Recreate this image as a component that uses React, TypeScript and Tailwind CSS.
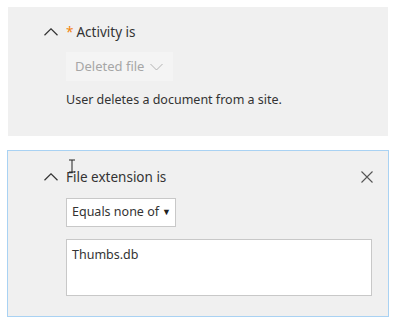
import React from 'react';

function ChevronUp() {
  return (
    <svg width="14" height="8" viewBox="0 0 14 8" className="shrink-0">
      <path d="M0.5 7.2 L7 0.8 L13.5 7.2" fill="none" stroke="#333333" strokeWidth="1.2" />
    </svg>
  );
}

function ChevronDown() {
  return (
    <svg width="13" height="8" viewBox="0 0 13 8" className="shrink-0">
      <path d="M0.5 1 L6.5 7 L12.5 1" fill="none" stroke="#b3b3b3" strokeWidth="1" />
    </svg>
  );
}

function CloseIcon() {
  return (
    <svg width="12" height="12" viewBox="0 0 12 12">
      <path d="M0.5 0.5 L11.5 11.5 M11.5 0.5 L0.5 11.5" fill="none" stroke="#555555" strokeWidth="1.1" />
    </svg>
  );
}

function IBeam() {
  return (
    <svg width="8" height="14" viewBox="0 0 8 14" className="absolute left-[68px] top-[159px]">
      <path d="M1 1 H7 M4 1 V13 M1 13 H7" fill="none" stroke="#222222" strokeWidth="1" />
    </svg>
  );
}

export default function App() {
  return (
    <div
      className="relative w-[400px] h-[325px] bg-white text-[#333333] text-[13.5px] overflow-hidden"
      style={{ fontFamily: '"Segoe UI", "Noto Sans", sans-serif' }}
    >
      <div className="pt-[7px] px-[8px]">
        {/* Activity condition */}
        <div className="w-[380px] h-[129px] bg-[#f0f0f0] pt-[15px] pl-[36px]">
          <div className="flex items-center h-[20px]">
            <ChevronUp />
            <span className="ml-[8px] text-[#f2820c] mr-[3px]">*</span>
            <span>Activity is</span>
          </div>
          <div className="ml-[22px] mt-[10px] w-[107px] h-[29px] bg-[#f4f4f4] flex items-center pl-[9px] gap-[6px] text-[#a6a6a6] text-[13px] whitespace-nowrap">
            <span>Deleted file</span>
            <ChevronDown />
          </div>
          <div className="ml-[22px] mt-[9px] leading-[20px] text-[12.5px]">User deletes a document from a site.</div>
        </div>

        {/* File extension condition */}
        <div className="mt-[14px] -ml-[1px] w-[382px] h-[167px] bg-[#f0f0f0] border border-[#a9d2f3] pt-[16px] pl-[36px] pr-[15px]">
          <div className="flex items-center h-[20px]">
            <ChevronUp />
            <span className="ml-[8px]">File extension is</span>
            <div className="ml-auto">
              <CloseIcon />
            </div>
          </div>
          <div className="ml-[22px] mt-[11px] w-[110px] h-[29px] bg-white border border-[#c8c8c8] flex items-center pl-[5px] pr-[4px] text-[12.5px] whitespace-nowrap">
            <span>Equals none of</span>
            <span className="ml-auto text-[9px] text-[#222222] -mt-[2px]">▼</span>
          </div>
          <div className="ml-[22px] mt-[12px] w-[306px] h-[57px] bg-white border border-[#c8c8c8] pl-[5px] pt-[5px] leading-[20px] text-[12.5px]">
            Thumbs.db
          </div>
        </div>
      </div>
      <IBeam />
    </div>
  );
}
